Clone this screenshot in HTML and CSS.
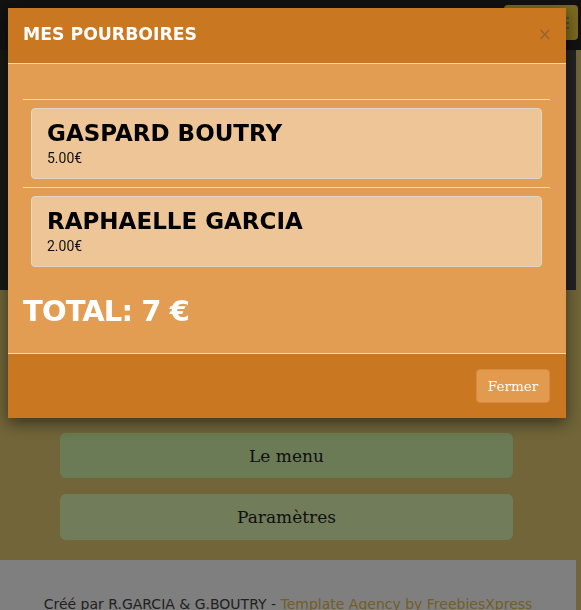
FILE: index.html
```html
<!DOCTYPE html>
<html lang="fr">
<head>
<meta charset="utf-8">
<title>Mes pourboires</title>
<link rel="stylesheet" href="styles.css">
</head>
<body>
<div class="page">
  <nav class="navbar">
    <button class="nav-toggle" aria-label="Menu">
      <span></span><span></span><span></span>
    </button>
  </nav>
  <header class="hero"></header>
  <section class="actions">
    <button class="action">Le menu</button>
    <button class="action action-alt">Paramètres</button>
  </section>
  <footer class="site-footer">
    <p>Créé par R.GARCIA &amp; G.BOUTRY - <a href="#">Template Agency by FreebiesXpress</a></p>
  </footer>
</div>

<div class="backdrop"></div>
<div class="modal">
  <div class="modal-content">
    <div class="modal-header">
      <h4 class="modal-title">MES POURBOIRES</h4>
      <span class="close">×</span>
    </div>
    <div class="modal-body">
      <ul class="tips">
        <li class="tip">
          <div class="tip-card">
            <h3 class="tip-name">GASPARD BOUTRY</h3>
            <p class="tip-amount">5.00€</p>
          </div>
        </li>
        <li class="tip">
          <div class="tip-card">
            <h3 class="tip-name">RAPHAELLE GARCIA</h3>
            <p class="tip-amount">2.00€</p>
          </div>
        </li>
      </ul>
      <h2 class="total">TOTAL: 7 €</h2>
    </div>
    <div class="modal-footer">
      <button class="btn-close">Fermer</button>
    </div>
  </div>
</div>
</body>
</html>
```

FILE: styles.css
```css
* { box-sizing: border-box; }
html, body { margin: 0; padding: 0; }
body {
  background: #e2ca72;
  font-family: "DejaVu Sans", sans-serif;
  overflow: hidden;
  height: 610px;
}
.page {
  margin-right: 5px;
}
.navbar {
  height: 50px;
  background: #232323;
  margin-right: -5px;
  display: flex;
  justify-content: flex-end;
  align-items: flex-start;
  padding: 5px 3px 0 0;
}
.nav-toggle {
  width: 74px;
  height: 35px;
  background: #f4d43a;
  border: none;
  border-radius: 4px;
  display: flex;
  flex-direction: column;
  justify-content: center;
  align-items: flex-end;
  gap: 3px;
  padding: 0 9px 0 0;
}
.nav-toggle span {
  display: block;
  width: 22px;
  height: 2px;
  background: #9a9a9a;
}
.hero {
  height: 240px;
  background: linear-gradient(100deg, #2e2f26 0%, #3a3a33 30%, #404040 70%, #464646 100%);
}
.actions {
  padding: 143px 63px 20px 60px;
  display: flex;
  flex-direction: column;
  gap: 16px;
}
.action {
  height: 45px;
  border: none;
  border-radius: 6px;
  background: #d6f6ac;
  font-family: "DejaVu Serif", serif;
  font-size: 17px;
  color: #222;
}
.action-alt {
  height: 46px;
  background: #e2f8b4;
}
.site-footer {
  background: #ffffff;
  height: 50px;
  padding-top: 36px;
  text-align: center;
}
.site-footer p {
  margin: 0;
  font-family: "DejaVu Sans", sans-serif;
  font-size: 14px;
  color: #444;
}
.site-footer a {
  color: #e6bc4a;
  text-decoration: none;
}

.backdrop {
  position: fixed;
  inset: 0;
  background: rgba(0, 0, 0, 0.5);
}
.modal {
  position: fixed;
  inset: 0;
  padding: 8px 15px 8px 8px;
}
.modal-content {
  width: 558px;
  background: #e29d53;
  box-shadow: 0 5px 15px rgba(0, 0, 0, 0.5);
}
.modal-header {
  background: #c97721;
  height: 56px;
  border-bottom: 1px solid #f3d6b5;
  display: flex;
  align-items: center;
  justify-content: space-between;
  padding: 0 15px 3px 15px;
}
.modal-title {
  margin: 0;
  font-family: "DejaVu Sans", sans-serif;
  font-weight: bold;
  font-size: 17.3px;
  color: #fff;
}
.close {
  font-family: "DejaVu Sans", sans-serif;
  font-size: 17px;
  color: #9c6430;
  margin-right: -1px;
}
.modal-body {
  padding: 35px 16px 16px 15px;
  border-bottom: 1px solid #f3d6b5;
}
.tips {
  list-style: none;
  margin: 0;
  padding: 0;
}
.tip {
  border-top: 1px solid #f3d6b5;
  padding: 8px 8px;
}
.tip + .tip { padding-bottom: 0; }
.tip-card {
  background: #eec596;
  border: 1px solid #dcd6cc;
  border-radius: 4px;
  padding: 10px 15px 11px 15px;
}
.tip-name {
  margin: 0 0 3px 0;
  font-family: "DejaVu Sans", sans-serif;
  font-weight: bold;
  font-size: 23px;
  line-height: 28px;
  color: #000;
}
.tip-amount {
  margin: 0;
  font-family: Roboto, sans-serif;
  font-size: 14px;
  line-height: 17px;
  color: #111;
}
.total {
  margin: 18px 0 0 0;
  font-family: "DejaVu Sans", sans-serif;
  font-weight: bold;
  font-size: 29px;
  letter-spacing: -0.9px;
  line-height: 52px;
  color: #fff;
}
.modal-footer {
  background: #c97721;
  height: 64px;
  padding: 15px 16px;
  display: flex;
  justify-content: flex-end;
  align-items: flex-start;
}
.btn-close {
  height: 34px;
  width: 74px;
  padding: 0;
  background: #e29a4f;
  border: 1px solid #d88a3e;
  border-radius: 4px;
  font-family: "DejaVu Serif", serif;
  font-size: 13.5px;
  color: #fff;
}
```
